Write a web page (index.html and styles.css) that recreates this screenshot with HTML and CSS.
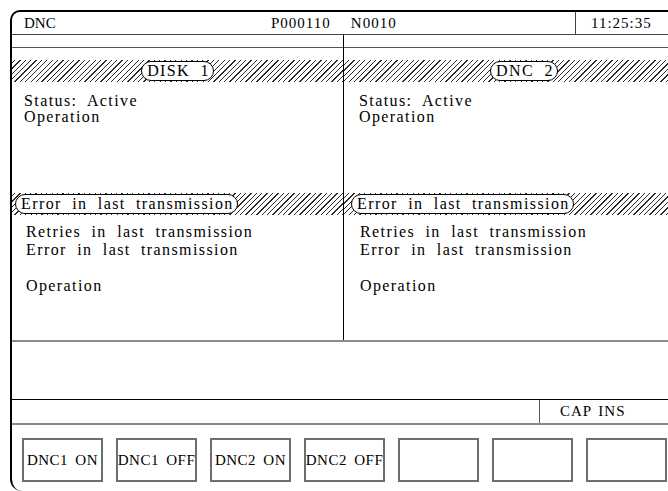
FILE: index.html
```html
<!DOCTYPE html>
<html lang="en">
<head>
    <meta charset="UTF-8">
    <meta name="viewport" content="width=device-width, initial-scale=1.0">
    <title>DNC</title>
    <link rel="stylesheet" href="styles.css">
</head>
<body>

    <div class="screen">

        <!-- Header: mode, program / block, clock -->
        <div class="header">
            <div class="mode">DNC</div>
            <div class="prog"><span>P000110</span><span class="block">N0010</span></div>
            <div class="clock">11:25:35</div>
        </div>

        <div class="panels">
            <div class="panel left">
                <div class="blank"></div>
                <div class="gap"></div>
                <div class="band center"><span class="pill">DISK 1</span></div>
                <div class="info">
                    <div>Status: Active</div>
                    <div>Operation</div>
                </div>
                <div class="band"><span class="pill">Error in last transmission</span></div>
                <div class="info errors">
                    <div>Retries in last transmission</div>
                    <div>Error in last transmission</div>
                    <div>&nbsp;</div>
                    <div>Operation</div>
                </div>
            </div>
            <div class="panel right">
                <div class="blank"></div>
                <div class="gap"></div>
                <div class="band center"><span class="pill">DNC 2</span></div>
                <div class="info">
                    <div>Status: Active</div>
                    <div>Operation</div>
                </div>
                <div class="band"><span class="pill">Error in last transmission</span></div>
                <div class="info errors">
                    <div>Retries in last transmission</div>
                    <div>Error in last transmission</div>
                    <div>&nbsp;</div>
                    <div>Operation</div>
                </div>
            </div>
        </div>

        <div class="message"></div>

        <div class="status">
            <div class="input"></div>
            <div class="keys">CAP INS</div>
        </div>

        <!-- Softkeys -->
        <div class="softkeys">
            <button>DNC1 ON</button>
            <button>DNC1 OFF</button>
            <button>DNC2 ON</button>
            <button>DNC2 OFF</button>
            <button></button>
            <button></button>
            <button></button>
        </div>

    </div>

</body>
</html>
```

FILE: styles.css
```css
/* General Reset */
body {
    margin: 0;
    padding: 0;
    background-color: #fff;
    color: #000;
    font-family: "Liberation Serif", "Times New Roman", serif;
    font-size: 16px;
    letter-spacing: 1.4px;
    word-spacing: 5px;
    overflow: hidden;
    height: 491px;
}

/* Outer frame */
.screen {
    margin: 10px 0 0 10px;
    width: 692px;
    height: 479px;
    border-top: 2px solid #000;
    border-left: 2px solid #000;
    border-radius: 10px 0 0 12px;
    display: flex;
    flex-direction: column;
}

/* Header */
.header {
    display: flex;
    height: 22px;
    align-items: center;
    border-bottom: 1px solid #444;
    font-size: 15px;
    letter-spacing: 1px;
    word-spacing: 0;
}

.mode {
    width: 247px;
    padding-left: 12px;
    letter-spacing: 0;
}

.prog {
    flex: 1;
}

.block {
    margin-left: 20px;
}

.clock {
    width: 113px;
    height: 100%;
    display: flex;
    align-items: center;
    padding-left: 15px;
    border-left: 1px solid #444;
}

/* Two channel panels */
.panels {
    display: grid;
    grid-template-columns: 332px 1fr;
    height: 305px;
    border-bottom: 2px solid #8a8a8a;
}

.panel {
    display: flex;
    flex-direction: column;
}

.panel.left {
    border-right: 1px solid #000;
}

.blank {
    height: 12px;
    border-bottom: 1px solid #555;
}

.gap {
    height: 12px;
}

.band {
    height: 22px;
    display: flex;
    align-items: center;
    padding-left: 3px;
    background: repeating-linear-gradient(-45deg, #2a2a2a 0 0.9px, #fff 0.9px 3.8px);
}

.right .band {
    padding-left: 7px;
}

.band.center {
    justify-content: center;
    padding-left: 0;
}

.pill {
    background-color: #fff;
    border: 1px solid #000;
    border-radius: 10px;
    height: 18px;
    line-height: 18px;
    padding: 0 3px 0 5px;
    white-space: nowrap;
}

.info {
    height: 100px;
    padding: 11px 0 0 12px;
    line-height: 16px;
}

.right .info {
    padding-left: 15px;
}

.info.errors {
    flex: 1;
    padding-top: 8px;
    padding-left: 14px;
    line-height: 18px;
}

.right .info.errors {
    padding-left: 16px;
}

/* Message line */
.message {
    height: 57px;
    border-bottom: 1px solid #000;
}

/* Status line */
.status {
    display: flex;
    height: 23px;
    border-bottom: 2px solid #8a8a8a;
    font-size: 15px;
    letter-spacing: 1px;
    word-spacing: 2px;
}

.input {
    width: 527px;
    border-right: 1px solid #555;
}

.keys {
    padding-left: 20px;
    display: flex;
    align-items: center;
}

/* Softkeys */
.softkeys {
    display: flex;
    gap: 13px;
    padding: 13px 0 0 10px;
}

button {
    width: 81px;
    height: 44px;
    flex: none;
    background-color: #fff;
    border: 2px solid #6e6e6e;
    padding: 0;
    font-family: "Liberation Serif", "Times New Roman", serif;
    font-size: 15px;
    letter-spacing: 0.5px;
    word-spacing: 3px;
    color: #000;
    white-space: nowrap;
    display: flex;
    align-items: center;
    justify-content: center;
    overflow: visible;
}
```
